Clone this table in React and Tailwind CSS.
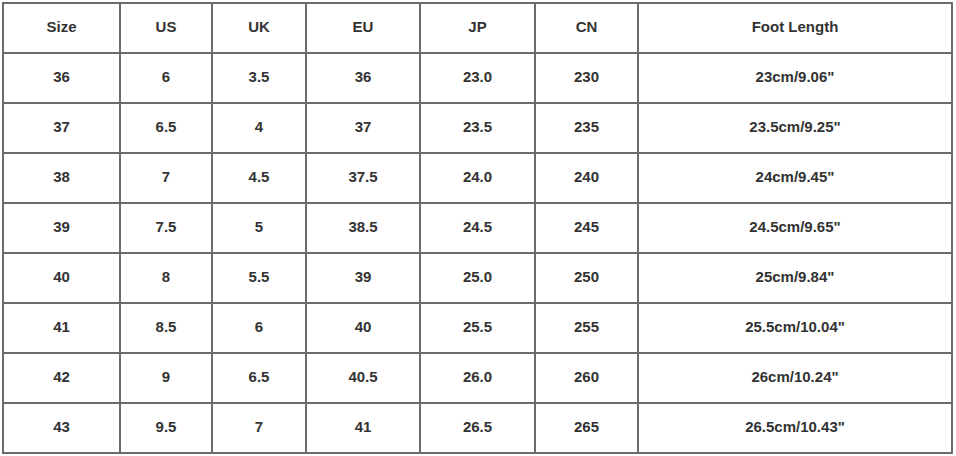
const headers = ['Size', 'US', 'UK', 'EU', 'JP', 'CN', 'Foot Length'];
const widths = ['w-[117px]', 'w-[92px]', 'w-[94px]', 'w-[114px]', 'w-[115px]', 'w-[103px]', 'w-[314px]'];

const rows = [
  ['36', '6', '3.5', '36', '23.0', '230', '23cm/9.06"'],
  ['37', '6.5', '4', '37', '23.5', '235', '23.5cm/9.25"'],
  ['38', '7', '4.5', '37.5', '24.0', '240', '24cm/9.45"'],
  ['39', '7.5', '5', '38.5', '24.5', '245', '24.5cm/9.65"'],
  ['40', '8', '5.5', '39', '25.0', '250', '25cm/9.84"'],
  ['41', '8.5', '6', '40', '25.5', '255', '25.5cm/10.04"'],
  ['42', '9', '6.5', '40.5', '26.0', '260', '26cm/10.24"'],
  ['43', '9.5', '7', '41', '26.5', '265', '26.5cm/10.43"'],
];

export default function App() {
  return (
    <div className="w-[956px] h-[456px] bg-white pt-[2px] pl-[2px]" style={{ fontFamily: '"Liberation Sans", Arial, sans-serif' }}>
      <table className="table-fixed border-collapse w-[951px] text-[15px] leading-[18px] font-bold text-[#333]">
        <thead>
          <tr className="h-[50px]">
            {headers.map((h, i) => (
              <th key={h} className={`${widths[i]} border-2 border-[#6b6b6b] pb-[3px] text-center align-middle font-bold`}>
                {h}
              </th>
            ))}
          </tr>
        </thead>
        <tbody>
          {rows.map((row) => (
            <tr key={row[0]} className="h-[50px]">
              {row.map((cell, i) => (
                <td key={i} className="border-2 border-[#6b6b6b] pb-[3px] text-center align-middle">
                  {cell}
                </td>
              ))}
            </tr>
          ))}
        </tbody>
      </table>
    </div>
  );
}
